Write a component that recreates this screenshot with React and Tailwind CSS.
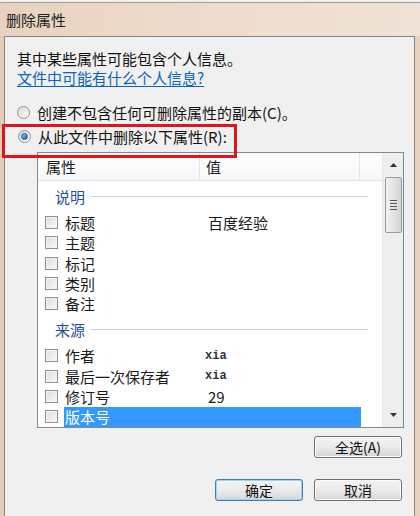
import React from 'react'

const cjk = { fontFamily: '"Noto Sans CJK SC", "Noto Sans", sans-serif' }

const Checkbox = () => (
  <div className="w-[13px] h-[13px] shrink-0 border border-[#8f8f8f] bg-gradient-to-br from-[#dcdcdc] to-[#fbfbfb] shadow-[inset_0_0_0_1px_#f4f4f4]" />
)

const Radio = ({ checked }) => (
  <div className="w-[13px] h-[13px] shrink-0 rounded-full border border-[#8e8f8f] bg-gradient-to-br from-[#d8d8d8] to-[#fdfdfd] flex items-center justify-center">
    {checked && (
      <div className="w-[7px] h-[7px] rounded-full bg-gradient-to-br from-[#8fc3f0] to-[#1d5fab] border border-[#1e5aa0]" />
    )}
  </div>
)

const Group = ({ label }) => (
  <div className="h-[32px] flex items-end pb-[5px] pl-[17px] pr-[14px]">
    <div className="flex items-center w-full h-[22px]">
      <span className="text-[15px] text-[#1e4fa0] leading-none">{label}</span>
      <div className="flex-1 ml-[6px] h-px bg-[#c9d5e6]" />
    </div>
  </div>
)

const Row = ({ label, value, mono, selected }) => (
  <div className="h-[20.8px] flex items-center leading-none">
    <div className="w-[26px] pl-[7px] flex items-center">
      <Checkbox />
    </div>
    <div
      className={
        'h-full w-[137px] flex items-center pl-[1px] text-[15px] ' +
        (selected ? 'bg-[#3399ff] text-white' : 'text-[#1a1a1a]')
      }
    >
      {label}
    </div>
    <div
      className={
        'h-full w-[160px] flex items-center ' +
        (selected ? 'bg-[#3399ff]' : '') +
        (mono ? ' pl-[4px] text-[12px] font-bold text-[#333]' : ' pl-[7px] text-[15px] text-[#1a1a1a]')
      }
      style={mono ? { fontFamily: '"Liberation Mono", monospace' } : undefined}
    >
      {value}
    </div>
  </div>
)

const Button = ({ children, focused }) => (
  <button
    className={
      'w-[88px] h-[22px] rounded-[3px] border text-[14px] leading-none text-[#111] flex items-center justify-center bg-gradient-to-b from-[#f3f3f3] via-[#ebebeb] to-[#d6d6d6] ' +
      (focused ? 'border-[#3c7fb1] shadow-[inset_0_0_0_1px_#9fd3f2]' : 'border-[#707070] shadow-[inset_0_0_0_1px_#fcfcfc]')
    }
  >
    {children}
  </button>
)

export default function App() {
  return (
    <div className="relative w-[420px] h-[516px] overflow-hidden bg-gradient-to-r from-[#e4cdb8] via-[#ead8c8] to-[#e8d2bf] flex flex-col" style={cjk}>
      <div className="h-[3px] bg-[#f3f1ef] border-b border-[#a09a94] shrink-0" />
      <div className="h-[33px] shrink-0 flex items-center pl-[6px] text-[15px] leading-none text-[#222] bg-gradient-to-r from-[#e7d2bf] via-[#eddcce] to-[#f0e2d6]">
        删除属性
      </div>
      <div className="flex-1 ml-[4px] w-[411px] border-l border-r border-t border-[#8a8580] bg-[#f0f0f0] flex flex-col pl-[12px] leading-none">
        <div className="mt-[13px] h-[17px] flex items-center text-[15px] text-[#111]">其中某些属性可能包含个人信息。</div>
        <div className="mt-[2px] h-[17px] flex items-center text-[15px] text-[#0c63c6] underline underline-offset-2">文件中可能有什么个人信息?</div>
        <div className="mt-[15px] h-[22px] flex items-center gap-[7px] text-[15px] text-[#111]">
          <Radio />
          <span>创建不包含任何可删除属性的副本(C)。</span>
        </div>
        <div className="mt-[2px] h-[22px] flex items-center gap-[7px] pl-[1px] text-[15px] text-[#111]">
          <Radio checked />
          <span>从此文件中删除以下属性(R):</span>
        </div>

        <div className="mt-[5px] ml-[20px] w-[367px] h-[276px] border border-[#828790] bg-white flex overflow-hidden">
          <div className="flex-1 flex flex-col overflow-hidden">
            <div className="h-[28px] shrink-0 flex items-stretch border-b border-[#e3e5e8] bg-gradient-to-b from-[#ffffff] to-[#f6f7f8] text-[15px] text-[#1a1a1a]">
              <div className="w-[162px] flex items-center pl-[8px] border-r border-[#e3e5e8]">属性</div>
              <div className="w-[160px] flex items-center pl-[6px] border-r border-[#e3e5e8]">值</div>
              <div className="flex-1" />
            </div>
            <Group label="说明" />
            <Row label="标题" value="百度经验" />
            <Row label="主题" />
            <Row label="标记" />
            <Row label="类别" />
            <Row label="备注" />
            <Group label="来源" />
            <Row label="作者" value="xia" mono />
            <Row label="最后一次保存者" value="xia" mono />
            <Row label="修订号" value="29" />
            <Row label="版本号" selected />
          </div>
          <div className="w-[21px] shrink-0 bg-[#eeeeee] border-l border-[#e6e6e6] flex flex-col items-center">
            <div className="h-[24px] flex items-center justify-center">
              <svg width="7" height="4" viewBox="0 0 7 4"><path d="M0 4 L3.5 0 L7 4 Z" fill="#333" /></svg>
            </div>
            <div className="w-[17px] h-[56px] rounded-[2px] border border-[#9a9a9a] bg-gradient-to-r from-[#f2f2f2] via-[#e4e4e4] to-[#d2d2d2] flex flex-col items-center justify-center gap-[2px]">
              <div className="w-[7px] h-px bg-[#555]" />
              <div className="w-[7px] h-px bg-[#555]" />
              <div className="w-[7px] h-px bg-[#555]" />
              <div className="w-[7px] h-px bg-[#555]" />
            </div>
            <div className="flex-1" />
            <div className="h-[24px] flex items-center justify-center">
              <svg width="7" height="4" viewBox="0 0 7 4"><path d="M0 0 L7 0 L3.5 4 Z" fill="#333" /></svg>
            </div>
          </div>
        </div>

        <div className="mt-[8px] flex justify-end pr-[12px]">
          <Button>全选(A)</Button>
        </div>
        <div className="mt-[21px] flex justify-end gap-[11px] pr-[12px]">
          <Button focused>确定</Button>
          <Button>取消</Button>
        </div>
      </div>

      <div className="absolute left-[2px] top-[124px] w-[235px] h-[34px] border-[3px] border-[#e3141c]" />
    </div>
  )
}
